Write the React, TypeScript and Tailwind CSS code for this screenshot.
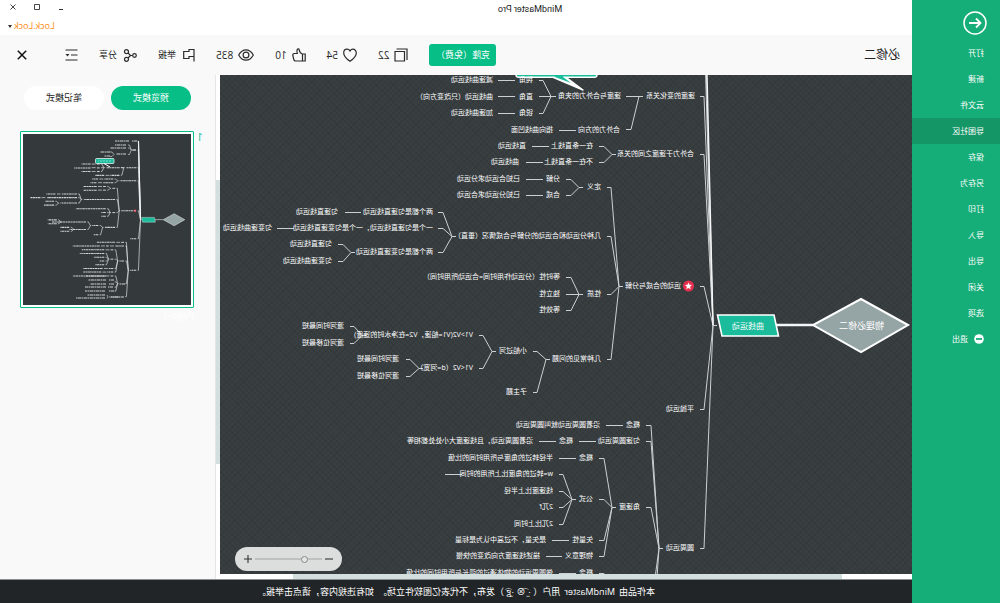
import { useState, type ReactNode } from "react";

type Topic = { x: number; y: number; text: string };
type Branch = { from: [number, number, number]; corner: number; end: number; ys: number[] };

const menuItems = ["打开", "新建", "云文件", "导图社区", "保存", "另存为", "打印", "导入", "导出", "关闭", "选项"];

const topics: Topic[] = [
  { x: 217, y: 21, text: "速度的变化关系" },
  { x: 291, y: 21, text: "速度与合外力的夹角" },
  { x: 379, y: 5, text: "钝角" },
  { x: 419, y: 5, text: "减速曲线运动" },
  { x: 379, y: 22, text: "直角" },
  { x: 419, y: 22, text: "曲线运动（只改变方向）" },
  { x: 379, y: 38, text: "锐角" },
  { x: 419, y: 38, text: "加速曲线运动" },
  { x: 292, y: 55, text: "合外力的方向" },
  { x: 359, y: 55, text: "指向曲线凹面" },
  { x: 218, y: 79, text: "合外力于速度之间的关系" },
  { x: 319, y: 71, text: "在一条直线上" },
  { x: 386, y: 71, text: "直线运动" },
  { x: 319, y: 87, text: "不在一条直线上" },
  { x: 393, y: 87, text: "曲线运动" },
  { x: 311, y: 112, text: "定义" },
  { x: 352, y: 104, text: "分解" },
  { x: 392, y: 104, text: "已知合运动求分运动" },
  { x: 352, y: 120, text: "合成" },
  { x: 392, y: 120, text: "已知分运动求合运动" },
  { x: 231, y: 211, text: "运动的合成与分解" },
  { x: 311, y: 161, text: "几种分运动和合运动的分解与合成情况（垂直）" },
  { x: 479, y: 137, text: "两个都是匀速直线运动" },
  { x: 574, y: 137, text: "匀速直线运动" },
  { x: 479, y: 153, text: "一个是匀速直线运动，一个是匀变速直线运动" },
  { x: 640, y: 153, text: "匀变速曲线运动" },
  { x: 479, y: 177, text: "两个都是匀变速直线运动" },
  { x: 580, y: 169, text: "匀速直线运动" },
  { x: 580, y: 186, text: "匀变速曲线运动" },
  { x: 311, y: 219, text: "性质" },
  { x: 352, y: 202, text: "等时性（分运动作用时间=合运动所用时间）" },
  { x: 352, y: 219, text: "独立性" },
  { x: 352, y: 235, text: "等效性" },
  { x: 311, y: 284, text: "几种常见的问题" },
  { x: 385, y: 276, text: "小船过河" },
  { x: 385, y: 317, text: "子主题" },
  { x: 439, y: 260, text: "V1>V2(V1=船速，V2=在净水时的速度)" },
  { x: 568, y: 251, text: "渡河时间最短" },
  { x: 568, y: 268, text: "渡河位移最短" },
  { x: 439, y: 293, text: "V1<V2（d=河宽）" },
  { x: 513, y: 284, text: "渡河时间最短" },
  { x: 513, y: 301, text: "渡河位移最短" },
  { x: 218, y: 334, text: "平抛运动" },
  { x: 218, y: 473, text: "圆周运动" },
  { x: 272, y: 350, text: "概念" },
  { x: 312, y: 350, text: "沿着圆周运动就叫圆周运动" },
  { x: 272, y: 366, text: "匀速圆周运动" },
  { x: 339, y: 366, text: "概念" },
  { x: 379, y: 366, text: "沿着圆周运动，且线速度大小处处都相等" },
  { x: 272, y: 432, text: "角速度" },
  { x: 319, y: 383, text: "概念" },
  { x: 359, y: 383, text: "半径转过的角度与所用时间的比值" },
  { x: 319, y: 424, text: "公式" },
  { x: 359, y: 399, text: "w=转过的角度比上所用的时间" },
  { x: 359, y: 416, text: "线速度比上半径" },
  { x: 359, y: 432, text: "2兀f" },
  { x: 359, y: 449, text: "2兀比上时间" },
  { x: 319, y: 465, text: "矢量性" },
  { x: 366, y: 465, text: "是矢量，不过高中认为是标量" },
  { x: 319, y: 481, text: "物理意义" },
  { x: 372, y: 481, text: "描述线速度方向改变的快慢" },
  { x: 319, y: 498, text: "概念" },
  { x: 359, y: 498, text: "做圆周运动的物体通过的弧长与所用时间的比值" },
];

/* from: [stub start, junction, y of the parent topic] */
const branches: Branch[] = [
  { from: [195, 199, 250], corner: 208, end: 212, ys: [-96, -55, 21, 79, 211, 334, 473] },
  { from: [269, 273, 21], corner: 281, end: 286, ys: [21, 54] },
  { from: [356, 361, 21], corner: 369, end: 373, ys: [5, 21, 38] },
  { from: [296, 300, 79], corner: 308, end: 313, ys: [71, 87] },
  { from: [329, 333, 112], corner: 341, end: 346, ys: [104, 120] },
  { from: [289, 293, 211], corner: 301, end: 305, ys: [112, 161, 219, 284] },
  { from: [456, 460, 161], corner: 469, end: 474, ys: [137, 153, 177] },
  { from: [557, 561, 177], corner: 569, end: 574, ys: [169, 186] },
  { from: [329, 333, 219], corner: 341, end: 346, ys: [202, 219, 235] },
  { from: [362, 366, 284], corner: 375, end: 379, ys: [276, 317] },
  { from: [416, 420, 276], corner: 429, end: 433, ys: [260, 293] },
  { from: [546, 550, 260], corner: 558, end: 562, ys: [251, 268] },
  { from: [489, 493, 293], corner: 502, end: 506, ys: [284, 301] },
  { from: [249, 253, 473], corner: 261, end: 266, ys: [350, 366, 432, 532, 589] },
  { from: [296, 300, 432], corner: 308, end: 313, ys: [383, 424, 465, 481] },
  { from: [336, 340, 424], corner: 349, end: 353, ys: [399, 416, 432, 449] },
  { from: [296, 300, 532], corner: 308, end: 313, ys: [498, 524, 548, 565] },
];

const connectors: [number, number, number][] = [
  [273, 285, 21], [397, 414, 5], [397, 414, 21], [397, 414, 38], [336, 353, 55],
  [363, 380, 71], [369, 386, 87], [369, 386, 104], [369, 386, 120], [551, 567, 137],
  [618, 635, 153], [289, 306, 350], [316, 333, 366], [356, 373, 366], [336, 353, 383],
  [450, 467, 399], [343, 360, 465], [350, 366, 481], [336, 353, 498],
];

const branchPath = branches
  .flatMap(({ from: [start, junction, y], corner, end, ys }) => [
    `M${start} ${y}H${junction}`,
    ...ys.map((cy) => `M${junction} ${y}L${corner} ${cy}H${end}`),
  ])
  .concat(connectors.map(([a, b, y]) => `M${a} ${y}H${b}`))
  .join("");

/* Topics that only the page overview shows: x, y, length */
const overviewRows: [number, number, number][] = [
  [54, 7, 5], [62, 7, 14], [55, 16, 4], [65, 11, 11], [65, 14, 16], [65, 20, 10],
  [81, 18, 10], [81, 22, 6], [66, 150, 6], [77, 146, 5], [85, 142, 20], [77, 150, 5],
  [85, 146, 18], [85, 150, 16], [78, 153, 5], [85, 153, 21], [77, 157, 5], [86, 157, 20],
  [67, 163, 13], [86, 161, 18], [86, 164, 29],
];

function MapShapes() {
  return (
    <>
      <path d="M99 250H136" stroke="#f4f6f6" strokeWidth="2.400" />
      <path d="M4 250L51 224L99 250L51 277Z" fill="#95a5a6" stroke="#fff" strokeWidth="2" />
      <path d="M138 240H194.500L190 261H133.500Z" fill="#1abc9c" stroke="#fff" strokeWidth="1.600" />
      <circle cx="223.500" cy="211" r="5.500" fill="#e6304f" />
      <path d="M223.500 207.500l1 2.300 2.500.2-1.900 1.700.6 2.500-2.200-1.300-2.200 1.300.6-2.500-1.900-1.700 2.500-.2z" fill="#fff" />
    </>
  );
}

function MindMap() {
  return (
    <div className="absolute inset-0 overflow-hidden text-[7px] text-white">
      <svg className="absolute top-0 left-0" width="692" height="499" fill="none" aria-hidden="true">
        <g transform="translate(0 .5)">
          <path d={branchPath} stroke="#cdd0d1" strokeWidth="1" />
        </g>
        <path d="M199 250L205 0" stroke="#f4f6f6" strokeWidth="1.400" />
        <path d="M315 -8V0Q315 2.300 318 2.300H393Q396 2.300 396 0V-8" fill="#1abc9c" stroke="#fff" strokeWidth="1.500" />
        <path d="M359 2.300L329 15L346 2.300" fill="#fff" stroke="#fff" strokeWidth="1.400" strokeLinejoin="round" />
        <path d="M357 0V2L341 8L349 2V0Z" fill="#1abc9c" />
        <MapShapes />
      </svg>
      {topics.map((t) => (
        <span
          key={`${t.x}-${t.y}`}
          className="absolute h-2 leading-2 whitespace-nowrap"
          style={{ left: t.x, top: t.y - 4 }}
        >
          {t.text}
        </span>
      ))}
      <span className="absolute top-[246px] left-[28px] text-[9px] leading-[10px] whitespace-nowrap">物理必修二</span>
      <span className="absolute top-[246px] left-[148px] text-[8px] leading-[10px] whitespace-nowrap">曲线运动</span>
    </div>
  );
}

function Overview() {
  return (
    <svg className="block w-full" viewBox="0 0 168 171" fill="none" aria-hidden="true">
      <g transform="translate(5.3 28.9) scale(.227)">
        <path d={branchPath} stroke="#dfe2e3" strokeWidth="3" />
        <path d="M199 250L208 -96" stroke="#f4f6f6" strokeWidth="5" />
        {topics.map((t) => (
          <path
            key={`${t.x}-${t.y}`}
            d={`M${t.x} ${t.y}h${t.text.length * 6.6}`}
            stroke="#ced2d4"
            strokeWidth="4.500"
            strokeDasharray="12 2 7 2"
          />
        ))}
        <MapShapes />
      </g>
      {overviewRows.map(([x, y, w]) => (
        <path key={`${x}-${y}`} d={`M${x} ${y}h${w}`} stroke="#ced2d4" strokeDasharray="3 .5 2 .5" />
      ))}
      <path
        d="M55 16h4.500M63 11h-1.500L59.700 16l1.800 4.500H63M59.700 16L61.500 14H63M77 20.500l2-2.500h2M77 20.500l2 2h2M72 163h10M83 163l1-2M83 163l1 1.500"
        stroke="#dfe2e3"
        strokeWidth=".6"
      />
      <rect x="77" y="24.500" width="18.500" height="5" rx="1" fill="#1abc9c" stroke="#fff" strokeWidth=".7" />
      <path d="M87 29.500L81 33" stroke="#fff" />
      <path d="M80 27h13" stroke="#7fdcca" strokeDasharray="2 1" />
    </svg>
  );
}

function Stat({ icon, label, name }: { icon: ReactNode; label: string; name: string }) {
  return (
    <button type="button" aria-label={name} className="flex items-center gap-[5px] text-[10px]">
      {icon}
      <span>{label}</span>
    </button>
  );
}

const stroke = { fill: "none", stroke: "#2b2b2b", strokeWidth: 1.2 } as const;

export default function App() {
  const [view, setView] = useState("preview");
  const [zoom, setZoom] = useState(24);
  const tab = "h-6 w-20 rounded-full text-[9px]";

  return (
    <div className="flex h-screen -scale-x-100 overflow-hidden bg-[#f9f9f9] font-['Open_Sans','Noto_Sans_CJK_SC',sans-serif] text-[#222]">
      <nav className="flex w-[88px] shrink-0 flex-col bg-[#16ae78] text-[8px] text-white">
        <button type="button" aria-label="返回" className="mt-[11px] mb-[5px] ml-[13px] size-6">
          <svg viewBox="0 0 24 24" fill="none" stroke="#fff" strokeWidth="1.500">
            <circle cx="12" cy="12" r="11" />
            <path d="M18 12H6.500M11 7.500L6.500 12L11 16.500" strokeWidth="1.800" />
          </svg>
        </button>
        {menuItems.map((item) => (
          <a
            key={item}
            href="#"
            className={
              item === "导图社区"
                ? "flex h-[26px] items-center bg-[#149667] pl-4"
                : "flex h-[26px] items-center pl-4"
            }
          >
            {item}
          </a>
        ))}
        <a href="#" className="flex h-[26px] items-center gap-[6px] pl-4">
          <svg className="size-[10px]" viewBox="0 0 10 10">
            <circle cx="5" cy="5" r="4.800" fill="#fff" />
            <path d="M2 5H8" stroke="#16ae78" strokeWidth="1.800" />
          </svg>
          退出
        </a>
      </nav>

      <div className="flex min-w-0 flex-1 flex-col">
        <header className="flex h-[35px] shrink-0 bg-white">
          <h1 className="flex-1 pr-[76px] text-center font-[Roboto,sans-serif] text-[9px] leading-[18px]">MindMaster Pro</h1>
          <div className="flex w-[72px] flex-col items-end gap-2 pt-[2px] pr-2">
            <div className="flex gap-[14px]">
              <button type="button" aria-label="最小化">
                <svg className="size-[10px]" viewBox="0 0 10 10"><path d="M3 7.500H7" stroke="#333" /></svg>
              </button>
              <button type="button" aria-label="最大化">
                <svg className="size-[10px]" viewBox="0 0 10 10"><path d="M2.500 2.500H7.500V7.500H2.500Z" fill="none" stroke="#333" strokeWidth=".9" /></svg>
              </button>
              <button type="button" aria-label="关闭窗口">
                <svg className="size-[10px]" viewBox="0 0 10 10"><path d="M2.500 2.500L7.500 7.500M7.500 2.500L2.500 7.500" stroke="#333" strokeWidth=".9" /></svg>
              </button>
            </div>
            <button type="button" className="flex items-center gap-[2px] text-[9px] leading-3 font-medium text-[#ff8c14]">
              Lock.Lock
              <svg className="h-[3px] w-1" viewBox="0 0 4 3"><path d="M0 0H4L2 3Z" fill="#333" /></svg>
            </button>
          </div>
        </header>

        <div className="flex h-10 shrink-0 items-center pr-[17px] pl-3">
          <h2 className="mr-auto text-[12px]">必修二</h2>
          <div className="flex items-center gap-[21px]">
            <button type="button" className="h-[22px] w-[67px] rounded-[3px] bg-[#06be86] text-[9px] text-white">
              克隆（免费）
            </button>
            <Stat
              name="克隆数"
              label="22"
              icon={
                <svg className="size-[14px]" viewBox="0 0 14 14" {...stroke}>
                  <path d="M3.500 3.500H13V13H3.500Z" />
                  <path d="M1 12V1H11.500" />
                </svg>
              }
            />
            <Stat
              name="收藏数"
              label="54"
              icon={
                <svg className="size-[14px]" viewBox="0 0 14 14" {...stroke}>
                  <path d="M7 13.200C3.500 10.800.7 8 .7 4.900.7 2.700 2.300 1.200 4.100 1.200 5.300 1.200 6.400 1.900 7 3 7.600 1.900 8.700 1.200 9.900 1.200 11.700 1.200 13.300 2.700 13.300 4.900 13.300 8 10.500 10.800 7 13.200Z" />
                </svg>
              }
            />
            <Stat
              name="点赞数"
              label="10"
              icon={
                <svg className="size-[14px]" viewBox="0 0 14 14" {...stroke}>
                  <path d="M.8 6H3.500V13H.8ZM3.500 12.800L5.500 13H10.500C11.500 13 12 12.300 12.200 11.500L13.200 7.500C13.400 6.300 12.700 5.500 11.800 5.500H8.700C9.200 4 9.200 2.500 8.800 1.500 8.400.7 7 .7 6.800 1.700 6.600 3.700 5.500 5.300 3.500 6.200" />
                </svg>
              }
            />
            <Stat
              name="浏览数"
              label="835"
              icon={
                <svg className="h-[14px] w-4" viewBox="0 0 16 14" {...stroke}>
                  <path d="M.7 7C2.500 3.700 5 1.800 8 1.800S13.500 3.700 15.300 7C13.500 10.300 11 12.200 8 12.200S2.500 10.300.7 7Z" />
                  <circle cx="8" cy="7" r="2.900" />
                </svg>
              }
            />
            <button type="button" className="flex items-center gap-[7px] text-[9px]">
              <svg className="h-[14px] w-3" viewBox="0 0 12 14" {...stroke}>
                <path d="M1 13.500V1.500H6V3.500H11.300V10.500H6V8.500H1" />
              </svg>
              举报
            </button>
            <button type="button" className="flex items-center gap-[6px] text-[9px]">
              <svg className="h-[13px] w-[14px]" viewBox="0 0 14 13" {...stroke}>
                <circle cx="2.500" cy="6.500" r="1.800" />
                <circle cx="10.500" cy="2.700" r="2" />
                <circle cx="10.500" cy="10.300" r="2" />
                <path d="M4.300 6.500H6.500L9 4M6.500 6.500L9 9" />
              </svg>
              分享
            </button>
            <button type="button" aria-label="目录">
              <svg className="block h-3 w-[13px]" viewBox="0 0 13 12" {...stroke}>
                <path d="M.5 1H12.500M.5 6H7M.5 11H12.500" />
                <path d="M8.500 5H12.500L10.500 7.500Z" fill="#2b2b2b" stroke="none" />
              </svg>
            </button>
            <button type="button" aria-label="关闭" className="ml-[17px]">
              <svg className="block size-[10px]" viewBox="0 0 10 10" stroke="#111" strokeWidth="1.500">
                <path d="M.8.8L9.200 9.200M9.200.8L.8 9.200" />
              </svg>
            </button>
          </div>
        </div>

        <div className="flex min-h-0 flex-1">
          <main className="flex min-w-0 flex-1 flex-col">
            <div className="flex min-h-0 flex-1">
              <div className="relative flex-1 bg-[#393e41] bg-[image:repeating-linear-gradient(45deg,rgba(0,0,0,0.07)_0_1px,transparent_1px_4px),repeating-linear-gradient(-45deg,rgba(0,0,0,0.07)_0_1px,transparent_1px_4px)]">
                <MindMap />
                <div className="absolute right-[15px] bottom-[3px] flex h-6 w-[107px] items-center justify-between rounded-full bg-[#dcdddd] px-[9px]">
                  <button type="button" aria-label="缩小">
                    <svg className="block size-2" viewBox="0 0 8 8" stroke="#333" strokeWidth="1.100"><path d="M0 4H8" /></svg>
                  </button>
                  <input
                    type="range"
                    aria-label="缩放"
                    value={zoom}
                    onChange={(e) => setZoom(Number(e.target.value))}
                    className="h-[2px] w-[67px] appearance-none bg-[#bfc1c1] [&::-webkit-slider-thumb]:size-[7px] [&::-webkit-slider-thumb]:appearance-none [&::-webkit-slider-thumb]:rounded-full [&::-webkit-slider-thumb]:border [&::-webkit-slider-thumb]:border-[#888] [&::-webkit-slider-thumb]:bg-[#e4e5e5]"
                  />
                  <button type="button" aria-label="放大">
                    <svg className="block size-2" viewBox="0 0 8 8" stroke="#333" strokeWidth="1.100"><path d="M0 4H8M4 0V8" /></svg>
                  </button>
                </div>
              </div>
              <div className="flex w-1 flex-col bg-white">
                <div className="h-[21%]" />
                <div className="h-[57%] bg-[#d3dfdf]" />
              </div>
            </div>
            <div className="flex h-[5px] shrink-0 bg-white">
              <div className="w-[10%]" />
              <div className="w-[79%] bg-[#d3dfdf]" />
            </div>
          </main>

          <aside className="w-[216px] shrink-0 border-l border-[#e2e6e6]">
            <div className="flex justify-center gap-[7px] pt-[11px]">
              <button
                type="button"
                onClick={() => setView("preview")}
                className={view === "preview" ? `${tab} bg-[#06be86] text-white` : `${tab} bg-white`}
              >
                预览模式
              </button>
              <button
                type="button"
                onClick={() => setView("notes")}
                className={view === "notes" ? `${tab} bg-[#06be86] text-white` : `${tab} bg-white`}
              >
                笔记模式
              </button>
            </div>
            <div className="flex gap-[2px] pt-[21px] pl-3">
              <span className="w-[7px] text-[11px] leading-3 text-[#1abc9c]">1</span>
              <figure className="w-[174px]">
                <div className="rounded-[1px] border border-[#06be86] bg-white p-[2px]">
                  <div className="bg-[#34393c]">
                    <Overview />
                  </div>
                </div>
                <figcaption className="text-[10px] leading-[14px] text-white">Page-1</figcaption>
              </figure>
            </div>
          </aside>
        </div>

        <footer className="flex h-6 shrink-0 items-center justify-center border-t border-[#8a8f91] bg-[#212527] text-[9px] text-white">
          <p className="flex gap-1">
            <span>本作品由</span>
            <span>MindMaster</span>
            <span>用户（ &middot;̫͡ ⊗ &middot;̫͡g ）发布，不代表亿图软件立场。</span>
            <span>如有违规内容，请点击举报。</span>
          </p>
        </footer>
      </div>
    </div>
  );
}
